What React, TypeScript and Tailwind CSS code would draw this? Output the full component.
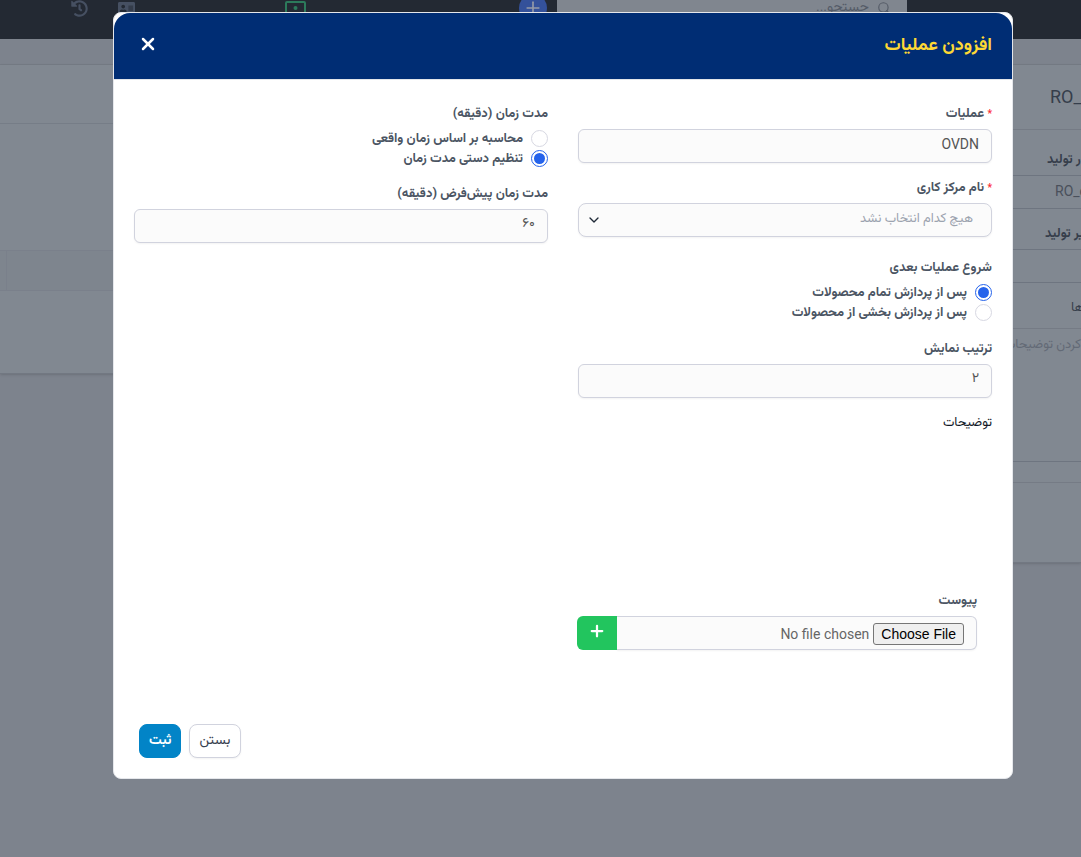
import React, { useState } from 'react';
import { FaHistory, FaAddressCard } from 'react-icons/fa';
import { ChevronDown, Plus, Search, X } from 'lucide-react';

const labelClass = 'block text-[13px] leading-5 font-bold text-[#4b5563]';
const inputClass =
  'block w-full h-[34px] px-3 pb-1 text-sm text-[#555] bg-[#fbfbfb] border border-[#d1d3de] rounded-md shadow-xs focus:outline-none';

interface RadioProps {
  name: string;
  label: string;
  checked: boolean;
  onChange: () => void;
}

const Radio: React.FC<RadioProps> = ({ name, label, checked, onChange }) => (
  <label className="flex items-center gap-2 h-5 text-[13px] font-bold text-[#4b5563]">
    <input
      type="radio"
      name={name}
      checked={checked}
      onChange={onChange}
      className="appearance-none size-[17px] shrink-0 p-[2px] rounded-full border border-[#d7d8e2] bg-white bg-clip-content checked:border-[#2563eb] checked:bg-[#2563eb]"
    />
    {label}
  </label>
);

const Required: React.FC = () => <span className="text-[10px] leading-none text-red-500">*</span>;

const Navbar: React.FC = () => (
  <header className="-mt-[23px] h-[62px] flex items-center bg-[#232933] pr-[174px] pl-[71px]">
    <label className="flex items-center gap-2 w-[350px] h-[34px] px-4 bg-[#80868f] text-[#545b67]">
      <Search size={14} />
      <input
        type="text"
        aria-label="جستجو"
        placeholder="جستجو..."
        className="flex-1 min-w-0 pb-1 text-sm placeholder:text-[#545b67] focus:outline-none"
      />
    </label>
    <button type="button" aria-label="افزودن" className="mr-[10px] size-7 rounded-full bg-[#34519a] text-[#959ba8] flex items-center justify-center">
      <Plus size={20} />
    </button>
    <div className="flex-1 flex items-center justify-end">
      <svg width="21" height="14" viewBox="0 0 21 14" fill="none" className="text-[#2c7a5b]">
        <rect x="1" y="1" width="19" height="12" rx="1" stroke="currentColor" strokeWidth="2" />
        <circle cx="10.500" cy="7" r="2" fill="currentColor" />
      </svg>
      <FaAddressCard size={17} className="mr-[150px] text-[#465062]" />
      <FaHistory size={17} className="mr-[30px] text-[#465062]" />
    </div>
  </header>
);

// page that stays visible at both sides of the dialog
const OrderPage: React.FC = () => (
  <div dir="ltr" className="flex items-start justify-between">
    <div className="w-[120px] h-[309px] bg-[#818891] border-b border-[#727882] shadow-sm">
      <div className="h-[59px] border-b border-[#767d87]" />
      <div className="mt-[126px] h-[41px] flex bg-[#7e858e] border-y border-[#7a808b]">
        <div className="w-[7px] border-r border-[#7a808b]" />
      </div>
    </div>
    <div className="w-[80px] bg-[#818891] border-b border-[#727882] shadow-sm overflow-hidden whitespace-nowrap text-[#363e4b]">
      <div className="pl-[49px] h-[65px] leading-[64px] text-[18px] border-b border-[#757b85]">RO_</div>
      <div className="pl-[46px] h-[46px] pt-[19px] text-[13px] leading-5 font-bold border-b border-[#6e7580]">ر تولید</div>
      <div className="pl-[54px] h-[33px] leading-[30px] text-sm text-[#4a505b] border-b border-[#6e7580]">RO_c</div>
      <div className="pl-[44px] h-[41px] pt-[14px] text-[13px] leading-5 font-bold border-b border-[#6e7580]">یر تولید</div>
      <div className="h-[33px] border-b border-[#6e7580]" />
      <div className="pl-[70px] h-[46px] pt-[14px] text-[13px] leading-5 border-b border-[#757b85]">ها</div>
      <div className="h-[133px] pt-[5px] text-[13px] leading-5 text-[#636a76] border-b border-[#6e7580]" dir="rtl">
        کردن توضیحات
      </div>
      <div className="h-[21px] border-b border-[#757b85]" />
      <div className="h-[79px]" />
    </div>
  </div>
);

const OperationDialog: React.FC = () => {
  const [operation, setOperation] = useState('OVDN');
  const [duration, setDuration] = useState('۶۰');
  const [order, setOrder] = useState('۲');
  const [durationMode, setDurationMode] = useState('manual');
  const [nextStart, setNextStart] = useState('all');

  return (
    <div role="dialog" aria-labelledby="dialog-title" className="w-full bg-white border border-[#e5e7eb] rounded-lg">
      <div className="h-[67px] flex items-center justify-between pr-5 pl-6 pb-1 bg-[#002d74] border-b border-[#e2e5ea] rounded-t-2xl">
        <h2 id="dialog-title" className="text-lg font-bold text-[#fdd835]">افزودن عملیات</h2>
        <button type="button" aria-label="بستن پنجره" className="text-white">
          <X size={20} strokeWidth={3} />
        </button>
      </div>

      <form className="pt-[23px]" onSubmit={(e) => e.preventDefault()}>
        <div className="grid grid-cols-2 gap-x-[30px] items-start px-5">
          <div>
            <div className="mb-[14px]">
              <label htmlFor="operation" className={labelClass}>
                <Required /> عملیات
              </label>
              <input id="operation" type="text" value={operation} onChange={(e) => setOperation(e.target.value)} className={`mt-[6px] ${inputClass}`} />
            </div>

            <div className="mb-5">
              <label htmlFor="workcenter" className={labelClass}>
                <Required /> نام مرکز کاری
              </label>
              <div className="mt-[6px] relative">
                <select id="workcenter" className="appearance-none block w-full h-[34px] pr-[18px] pl-8 pb-1 text-[13px] text-[#9ca3af] bg-[#fbfbfb] border border-[#d1d3de] rounded-lg shadow-xs">
                  <option>هیچ کدام انتخاب نشد</option>
                </select>
                <ChevronDown size={16} strokeWidth={2} className="absolute left-2 top-[9px] text-[#1f2937] pointer-events-none" />
              </div>
            </div>

            <fieldset className="mb-4">
              <legend className={`mb-[5px] ${labelClass}`}>شروع عملیات بعدی</legend>
              <Radio name="next" label="پس از پردازش تمام محصولات" checked={nextStart === 'all'} onChange={() => setNextStart('all')} />
              <Radio name="next" label="پس از پردازش بخشی از محصولات" checked={nextStart === 'part'} onChange={() => setNextStart('part')} />
            </fieldset>

            <div className="mb-[14px]">
              <label htmlFor="order" className={labelClass}>ترتیب نمایش</label>
              <input id="order" type="text" value={order} onChange={(e) => setOrder(e.target.value)} className={`mt-[6px] ${inputClass}`} />
            </div>

            <p className="text-[13px] leading-5 text-[#111827]">توضیحات</p>
          </div>

          <div>
            <fieldset className="mb-[15px]">
              <legend className={`mb-[5px] ${labelClass}`}>مدت زمان (دقیقه)</legend>
              <Radio name="duration" label="محاسبه بر اساس زمان واقعی" checked={durationMode === 'auto'} onChange={() => setDurationMode('auto')} />
              <Radio name="duration" label="تنظیم دستی مدت زمان" checked={durationMode === 'manual'} onChange={() => setDurationMode('manual')} />
            </fieldset>

            <label htmlFor="minutes" className={labelClass}>مدت زمان پیش‌فرض (دقیقه)</label>
            <input id="minutes" type="text" value={duration} onChange={(e) => setDuration(e.target.value)} className={`mt-[6px] ${inputClass}`} />
          </div>
        </div>

        <div className="mt-[158px] mr-[35px] w-[400px] max-w-full">
          <label htmlFor="attachment" className={labelClass}>پیوست</label>
          <div className="mt-[6px] flex h-[34px]">
            <input
              id="attachment"
              type="file"
              className="flex-1 min-w-0 px-3 pt-[6px] text-sm text-[#666] bg-[#fbfbfb] border border-l-0 border-[#d1d3de] rounded-r-md shadow-xs file:h-[22px] file:px-[7px] file:me-1 file:border file:border-[#767676] file:rounded-[3px] file:bg-[#efefef] file:text-black file:font-['Liberation_Sans',sans-serif]"
            />
            <button type="button" aria-label="افزودن پیوست" className="w-10 pb-1 flex items-center justify-center bg-[#22c55e] text-white rounded-l-md">
              <Plus size={18} strokeWidth={3} />
            </button>
          </div>
        </div>

        <div className="mt-[74px] pb-5 pl-[25px] flex justify-end gap-2">
          <button type="button" className="h-[34px] px-[9px] pb-1 text-sm text-[#374151] bg-white border border-[#d1d3de] rounded-lg shadow-xs">
            بستن
          </button>
          <button type="submit" className="h-[34px] px-[9px] pb-1 text-sm font-bold text-white bg-[#0284c7] border border-[#0284c7] rounded-lg">
            ثبت
          </button>
        </div>
      </form>
    </div>
  );
};

const App: React.FC = () => {
  return (
    <div dir="rtl" className="relative min-h-screen overflow-hidden bg-[#7d838d] font-[Roboto,Vazirmatn,'Noto_Sans_Arabic','DejaVu_Sans',sans-serif]">
      <Navbar />
      <div className="h-[26px] border-b border-[#757b85]" />
      <OrderPage />
      <div className="absolute inset-0 pt-3 pr-[68px] pl-[113px]">
        <OperationDialog />
      </div>
    </div>
  );
};

export default App;
